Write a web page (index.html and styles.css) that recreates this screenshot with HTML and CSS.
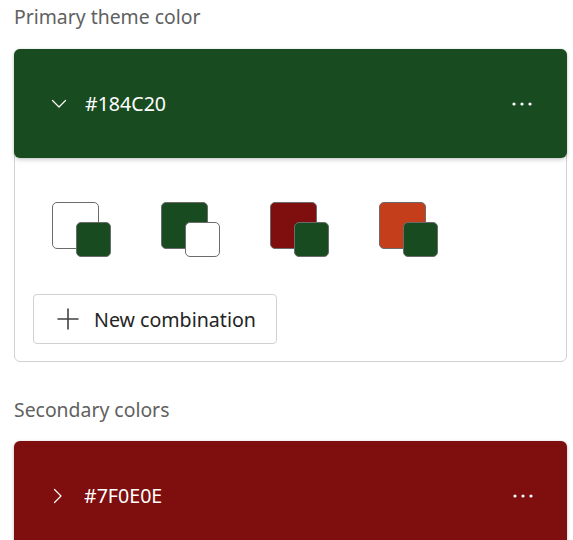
FILE: index.html
```html
<!DOCTYPE html>
<html lang="en">
<head>
<meta charset="utf-8">
<title>Theme colors</title>
<link rel="stylesheet" href="styles.css">
</head>
<body>
<main class="page">
  <h2 class="label">Primary theme color</h2>
  <section class="panel">
    <div class="card card-green">
      <svg class="chev" viewBox="0 0 16 16" width="16" height="16"><path d="M1.5 4.5 L8 11 L14.5 4.5" fill="none" stroke="#fff" stroke-width="1.2" stroke-linecap="round" stroke-linejoin="round"/></svg>
      <span class="hex">#184C20</span>
      <svg class="dots" viewBox="0 0 20 4" width="20" height="4"><circle cx="2" cy="2" r="1.6" fill="#fff"/><circle cx="10" cy="2" r="1.6" fill="#fff"/><circle cx="18" cy="2" r="1.6" fill="#fff"/></svg>
    </div>
    <div class="panel-body">
      <div class="swatches">
        <div class="pair"><span class="sq back c-white"></span><span class="sq front c-green"></span></div>
        <div class="pair"><span class="sq back c-green"></span><span class="sq front c-white"></span></div>
        <div class="pair"><span class="sq back c-red"></span><span class="sq front c-green"></span></div>
        <div class="pair"><span class="sq back c-orange"></span><span class="sq front c-green"></span></div>
      </div>
      <button class="btn" type="button">
        <svg class="plus" viewBox="0 0 24 24" width="24" height="24"><path d="M12 2 V22 M2 12 H22" fill="none" stroke="#424242" stroke-width="1.6" stroke-linecap="round"/></svg>
        <span>New combination</span>
      </button>
    </div>
  </section>
  <h2 class="label label-2">Secondary colors</h2>
  <div class="card card-red">
    <svg class="chev" viewBox="0 0 16 16" width="16" height="16"><path d="M4.5 1.5 L11 8 L4.5 14.5" fill="none" stroke="#fff" stroke-width="1.2" stroke-linecap="round" stroke-linejoin="round"/></svg>
    <span class="hex">#7F0E0E</span>
    <svg class="dots" viewBox="0 0 20 4" width="20" height="4"><circle cx="2" cy="2" r="1.6" fill="#fff"/><circle cx="10" cy="2" r="1.6" fill="#fff"/><circle cx="18" cy="2" r="1.6" fill="#fff"/></svg>
  </div>
</main>
</body>
</html>
```

FILE: styles.css
```css
* { box-sizing: border-box; }
html, body { margin: 0; padding: 0; background: #fff; }
body { font-family: "Noto Sans", "Open Sans", sans-serif; overflow: hidden; }
.page { padding: 0 6px 0 14px; display: flex; flex-direction: column; }
.label {
  margin: 0;
  font-size: 19.4px;
  font-weight: 400;
  line-height: 34px;
  color: #616161;
  height: 49px;
}
.label-2 { margin-top: 31px; height: 48px; }
.panel {
  border: 1px solid #d1d1d1;
  border-radius: 6px;
  display: flex;
  flex-direction: column;
}
.card {
  height: 109px;
  border-radius: 6px;
  display: flex;
  align-items: center;
  padding: 0 34px 0 36px;
  color: #fff;
  box-shadow: 0 2px 4px rgba(0,0,0,0.18), 0 0 2px rgba(0,0,0,0.14);
  flex-shrink: 0;
}
.panel .card { margin: -1px -1px 0 -1px; padding-left: 37px; padding-right: 35px; }
.card-green { background: #184c20; }
.card-red { background: #7f0e0e; }
.chev { flex-shrink: 0; }
.hex { font-size: 19.6px; margin-left: 18px; flex: 1; }
.dots { flex-shrink: 0; }
.panel-body {
  padding: 44px 0 17px 18px;
  display: flex;
  flex-direction: column;
}
.swatches { display: flex; gap: 50px; padding-left: 19px; margin-bottom: 37px; }
.pair { position: relative; width: 59px; height: 55px; }
.sq { position: absolute; border: 1px solid #6b6b6b; border-radius: 5px; }
.back { left: 0; top: 0; width: 47px; height: 47px; }
.front { left: 24px; top: 20px; width: 35px; height: 35px; }
.c-white { background: #fff; }
.c-green { background: #184c20; }
.c-red { background: #7f0e0e; }
.c-orange { background: #c43e1c; }
.btn {
  align-self: flex-start;
  width: 244px;
  height: 50px;
  border: 1px solid #d1d1d1;
  border-radius: 4px;
  background: #fff;
  display: flex;
  align-items: center;
  gap: 14px;
  padding: 0 0 0 22px;
  font-family: inherit;
  font-size: 19.6px;
  color: #242424;
  cursor: pointer;
}
.plus { flex-shrink: 0; }
```
